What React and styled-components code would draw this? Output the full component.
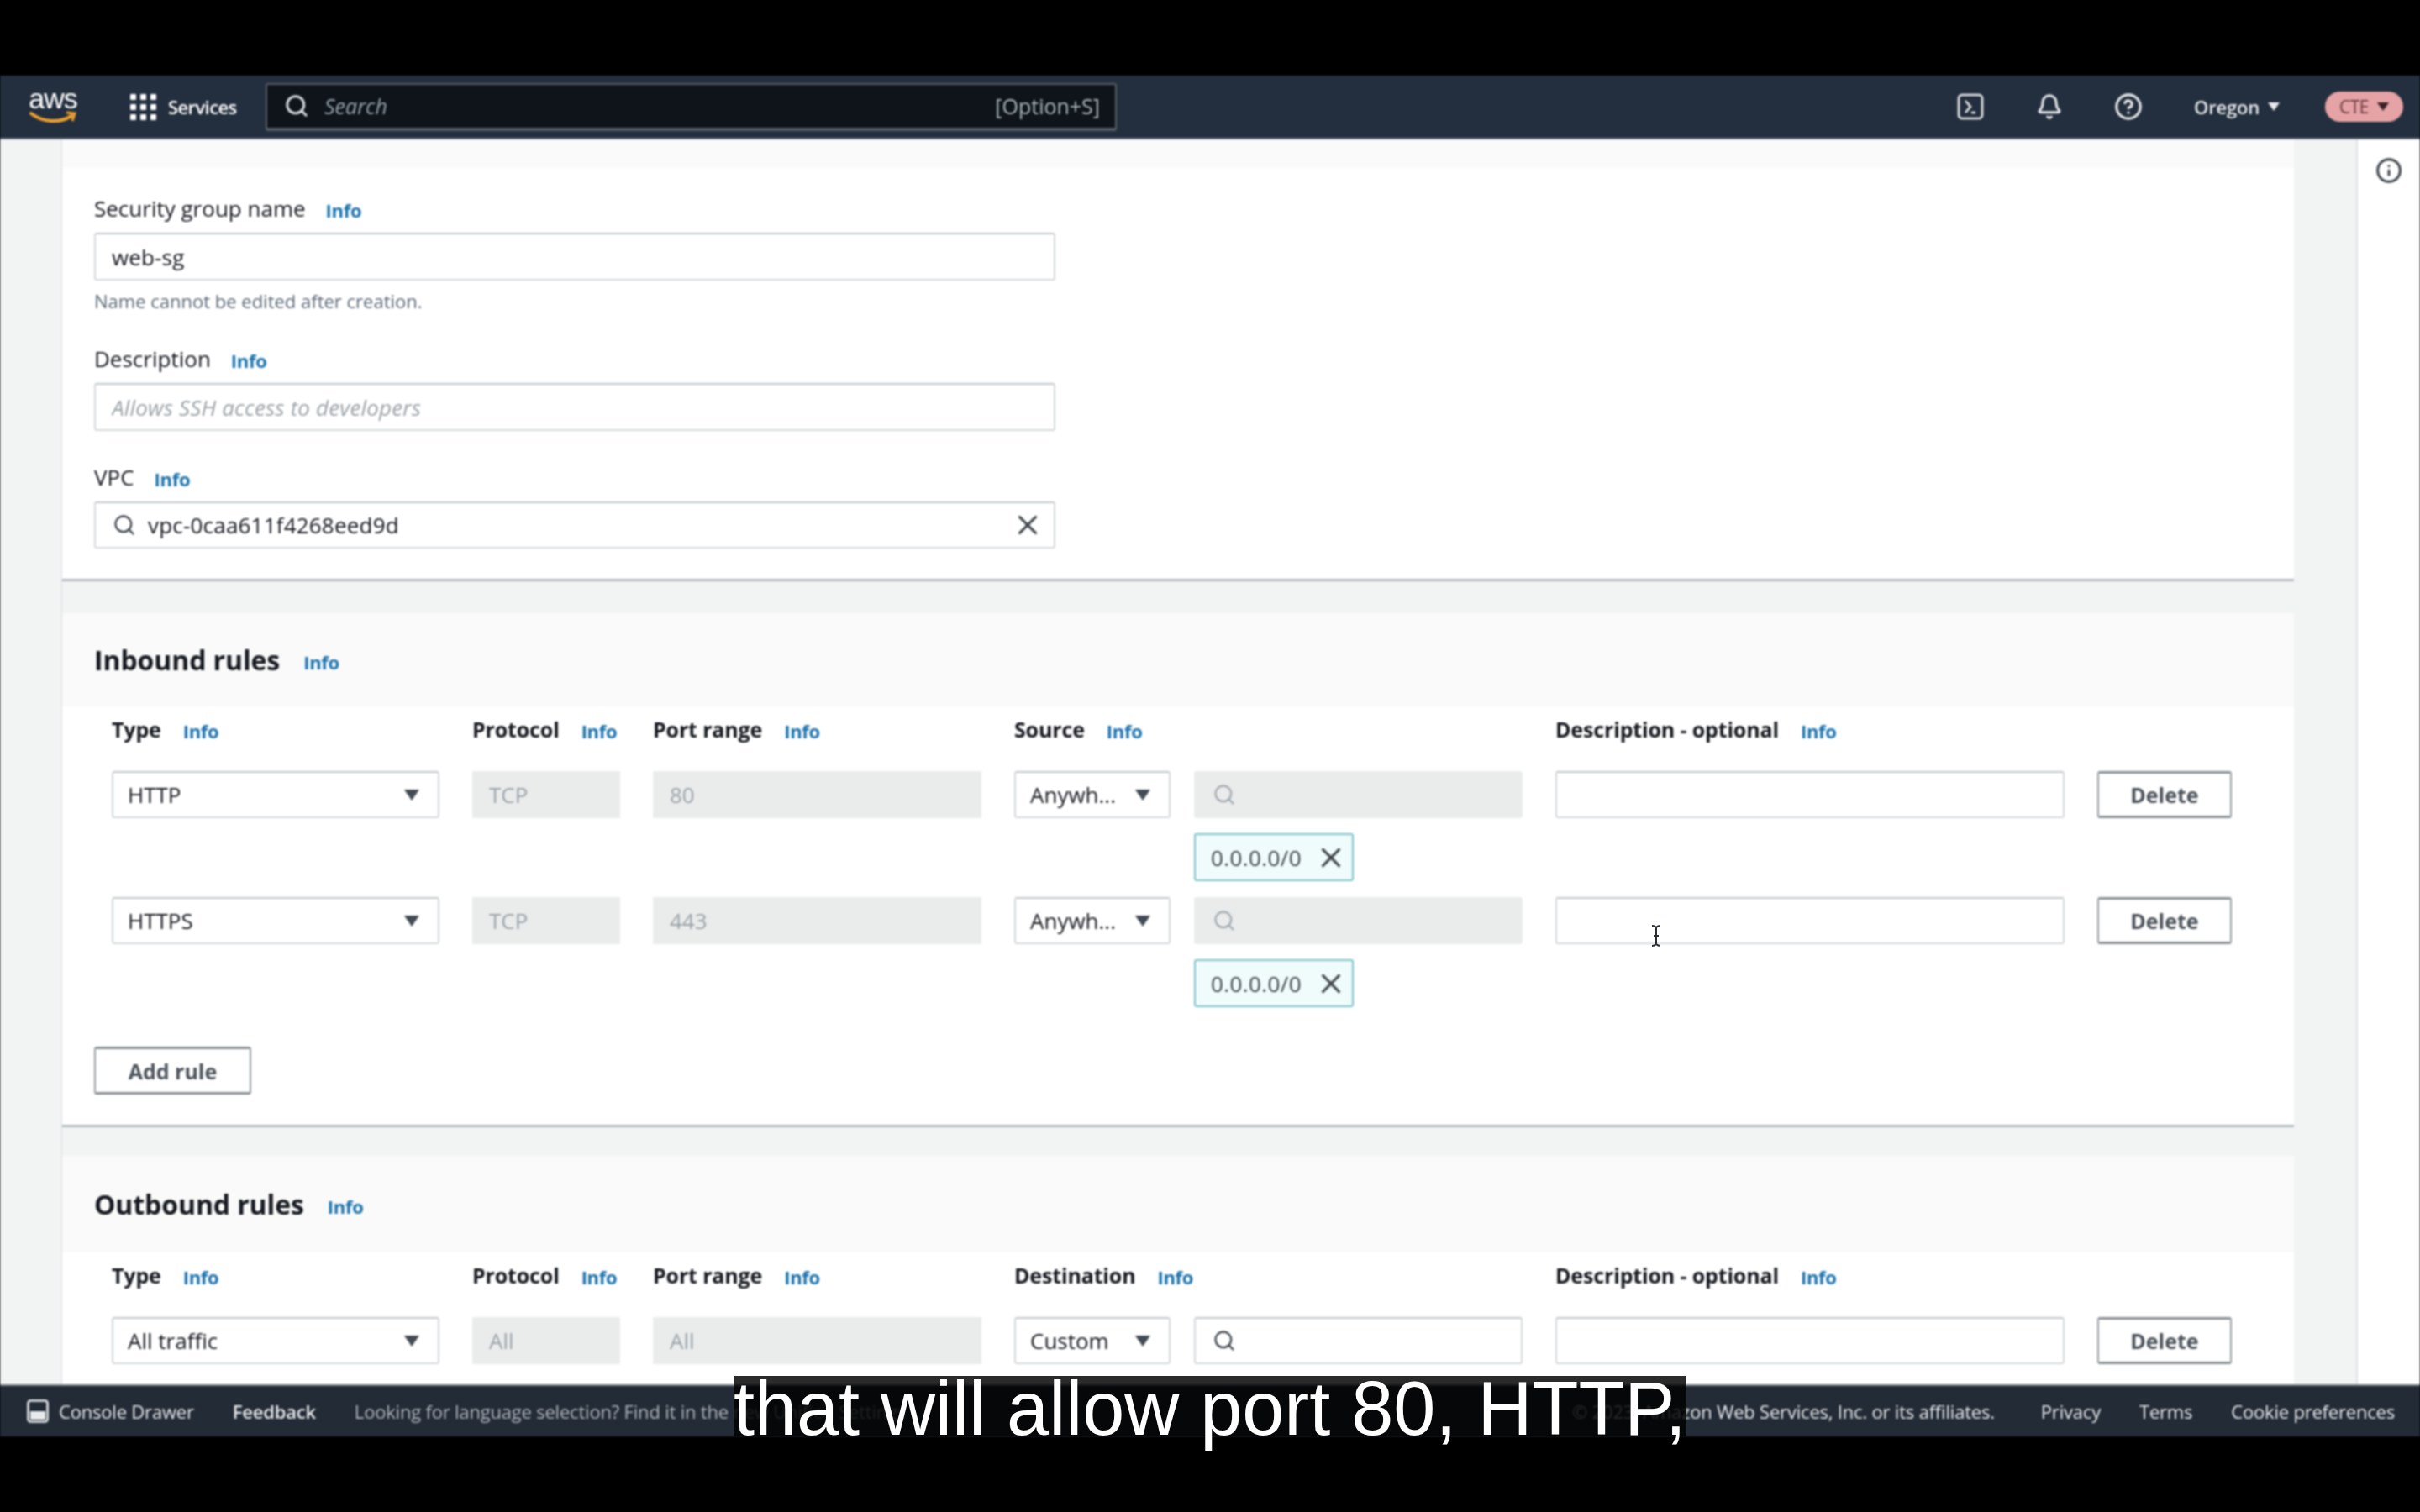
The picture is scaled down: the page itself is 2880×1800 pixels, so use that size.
import React from 'react';
import styled, { createGlobalStyle } from 'styled-components';
import { Search, X, Bell, CircleHelp, Info } from 'lucide-react';

const GlobalStyle = createGlobalStyle`
  html, body { margin: 0; padding: 0; background: #000; }
  * { box-sizing: border-box; }
  body { font-family: "Open Sans", "Noto Sans", "Liberation Sans", sans-serif; }
`;

const Frame = styled.div`
  position: relative;
  width: 2880px;
  height: 1800px;
  padding: 90px 0;
  background: #000;
  overflow: hidden;
`;

const Screen = styled.div`
  display: flex;
  flex-direction: column;
  height: 1620px;
  filter: blur(0.8px);
`;

/* top bar */
const TopNav = styled.header`
  flex: none;
  display: flex;
  align-items: center;
  height: 76px;
  padding: 0 20px 0 33px;
  background: #232f3e;
  border-bottom: 2px solid #6b7480;
  color: #fff;
`;

const Logo = styled.div`
  display: flex;
  flex-direction: column;
  align-items: center;
  width: 60px;
  margin-right: 62px;
  line-height: 1;
`;

const LogoWord = styled.span`
  font-family: "Liberation Sans", sans-serif;
  font-size: 34px;
  height: 28px;
  line-height: 26px;
  letter-spacing: -1px;
`;

const ServicesButton = styled.div`
  display: flex;
  align-items: center;
  gap: 14px;
  width: 161px;
  font-size: 22px;
  font-weight: 600;
  letter-spacing: -0.6px;
`;

const SearchBox = styled.div`
  display: flex;
  align-items: center;
  width: 1013px;
  height: 57px;
  padding: 0 18px 0 20px;
  background: #0f141b;
  border: 2px solid #545b64;
  border-bottom-width: 4px;
  border-radius: 3px;
  color: #aab7b8;
  font-size: 25px;
`;

const SearchHint = styled.span`
  margin-left: 18px;
  flex: 1;
  font-style: italic;
  color: #95a0a8;
`;

const NavRight = styled.div`
  display: flex;
  align-items: center;
  margin-left: auto;
`;

const NavIcon = styled.div`
  display: flex;
  justify-content: center;
  width: 94px;
`;

const Region = styled.div`
  display: flex;
  align-items: center;
  gap: 10px;
  margin-left: 31px;
  font-size: 22px;
  font-weight: 600;
  color: #e8eaec;
  letter-spacing: -0.2px;
`;

const Caret = styled.i`
  display: block;
  flex: none;
  width: 0;
  height: 0;
  border-left: ${(p) => p.$size || 9}px solid transparent;
  border-right: ${(p) => p.$size || 9}px solid transparent;
  border-top: ${(p) => (p.$size || 9) * 1.55}px solid ${(p) => p.$color || '#444b53'};
`;

const AccountPill = styled.div`
  display: flex;
  align-items: center;
  justify-content: center;
  gap: 10px;
  width: 93px;
  height: 36px;
  margin-left: 54px;
  border-radius: 18px;
  background: #e5a3a6;
  color: #6a3b40;
  font-size: 21px;
  letter-spacing: -0.5px;
`;

/* page body */
const Body = styled.div`
  flex: 1;
  display: flex;
  min-height: 0;
  background: #f2f3f3;
`;

const Main = styled.main`
  width: 2657px;
  margin-left: 73px;
  border-left: 1px solid #dde0e2;
  overflow: hidden;
`;

const Panel = styled.aside`
  display: flex;
  justify-content: center;
  width: 76px;
  margin-left: 74px;
  padding-top: 21px;
  background: #fff;
  border-left: 2px solid #dfe2e4;
  color: #3c4248;
`;

const Card = styled.section`
  margin-top: ${(p) => p.$top || 0}px;
  padding-bottom: ${(p) => p.$bottom || 0}px;
  background: #fff;
  border-bottom: 3px solid #b4b9bc;
`;

const CardHeader = styled.div`
  display: flex;
  align-items: center;
  gap: 28px;
  height: ${(p) => p.$height}px;
  padding: 0 38px;
  background: #fafafa;
`;

const CardTitle = styled.h2`
  margin: 0;
  font-size: 32px;
  font-weight: 700;
  letter-spacing: -0.1px;
  color: #16191f;
`;

const FormBody = styled.div`
  padding: 31px 38px 36px;
`;

const Field = styled.div`
  width: 1144px;
  & + & { margin-top: 38px; }
`;

const FieldLabel = styled.div`
  display: flex;
  align-items: center;
  gap: 24px;
  height: 34px;
  margin-bottom: 12px;
  font-size: 26px;
  color: #16191f;
`;

const InfoLink = styled.span`
  margin-top: 4px;
  font-size: 22px;
  font-weight: 700;
  letter-spacing: -0.3px;
  color: #1a73ad;
`;

const TextInput = styled.input`
  display: block;
  width: 100%;
  height: 57px;
  padding: 0 19px;
  border: 2px solid #d5d8da;
  border-top-color: #c2c6c9;
  border-radius: 3px;
  outline: none;
  background: #fff;
  font: 26px "Open Sans", sans-serif;
  letter-spacing: 0.15px;
  color: #16191f;
  &::placeholder { font-style: italic; color: #9ba3a8; opacity: 1; }
`;

const Hint = styled.div`
  height: 28px;
  margin-top: 10px;
  font-size: 22px;
  line-height: 28px;
  color: #5f6b7a;
`;

const SearchField = styled.div`
  display: flex;
  align-items: center;
  gap: 14px;
  height: ${(p) => p.$height || 56}px;
  padding: 0 12px 0 20px;
  border: 2px solid ${(p) => (p.$disabled ? '#eaecec' : '#d5d8da')};
  border-top-color: ${(p) => (p.$disabled ? '#eaecec' : '#c2c6c9')};
  border-radius: 3px;
  background: ${(p) => (p.$disabled ? '#eaecec' : '#fff')};
  font-size: 26px;
  letter-spacing: 0.2px;
  color: ${(p) => (p.$disabled ? '#a3aaae' : '#3c4248')};
`;

const FieldValue = styled.span`
  flex: 1;
  color: #16191f;
`;

/* rule tables */
const Columns = styled.div`
  display: grid;
  grid-template-columns: 390px 176px 391px 605px 606px 160px;
  column-gap: 39px;
  padding-left: 59px;
`;

const HeadRow = styled(Columns)`
  padding-top: ${(p) => p.$top}px;
  padding-bottom: ${(p) => p.$bottom}px;
`;

const RuleRow = styled(Columns)`
  margin-bottom: 19px;
`;

const HeadCell = styled.div`
  display: flex;
  align-items: center;
  gap: 26px;
  height: 34px;
  font-size: 25px;
  font-weight: 700;
  letter-spacing: -0.15px;
  color: #16191f;
`;

const SelectBox = styled.div`
  display: flex;
  align-items: center;
  justify-content: space-between;
  height: 56px;
  padding: 0 22px 0 17px;
  border: 2px solid #d5d8da;
  border-top-color: #c2c6c9;
  border-radius: 3px;
  background: #fff;
  font-size: 26px;
  color: #16191f;
`;

const DisabledBox = styled.div`
  display: flex;
  align-items: center;
  height: 56px;
  padding: 0 20px;
  background: #eaecec;
  font-size: 26px;
  color: #9ba3a8;
`;

const EmptyInput = styled.div`
  height: 56px;
  border: 2px solid #d5d8da;
  border-top-color: #c2c6c9;
  border-radius: 3px;
  background: #fff;
`;

const SourceCell = styled.div`
  display: grid;
  grid-template-columns: 186px 391px;
  column-gap: 28px;
  row-gap: 18px;
`;

const Chip = styled.div`
  grid-column: 2;
  display: flex;
  align-items: center;
  justify-content: space-between;
  width: 190px;
  height: 57px;
  padding: 0 6px 0 18px;
  background: #f0fbfc;
  border: 2px solid #7cc4c9;
  border-radius: 3px;
  font-size: 26px;
  letter-spacing: 0.4px;
  color: #3c4248;
`;

const OutlineButton = styled.div`
  display: flex;
  align-items: center;
  justify-content: center;
  width: ${(p) => p.$width}px;
  height: ${(p) => p.$height || 56}px;
  border: 2px solid #9aa0a5;
  border-top: 3px solid #8b9196;
  border-bottom: 3px solid #8b9196;
  border-radius: 3px;
  background: #fff;
  font-size: 25px;
  font-weight: 700;
  color: #4b5259;
`;

const AddRow = styled.div`
  padding: 28px 38px 36px;
`;

const TextCursor = styled.svg`
  position: absolute;
  left: 1961px;
  top: 1100px;
`;

/* footer */
const Footer = styled.footer`
  flex: none;
  display: flex;
  align-items: center;
  height: 62px;
  padding: 0 30px 0 32px;
  background: #232b37;
  border-top: 2px solid #7d848c;
  font-size: 22px;
  letter-spacing: -0.2px;
  color: #e8eaec;
`;

const FooterItem = styled.span`
  display: flex;
  align-items: center;
  gap: 12px;
  margin-left: ${(p) => (p.$push ? 'auto' : '0')};
  margin-right: ${(p) => p.$gap || 0}px;
  font-weight: ${(p) => p.$weight || 400};
  color: ${(p) => p.$color || 'inherit'};
  white-space: nowrap;
`;

const Caption = styled.div`
  position: absolute;
  left: 873px;
  top: 1638px;
  width: 1134px;
  height: 72px;
  background: rgba(0, 0, 0, 0.83);
  font-family: "Liberation Sans", Arial, sans-serif;
  font-size: 90px;
  line-height: 78px;
  color: #fff;
  white-space: nowrap;
`;

const CloudShellIcon = () => (
  <svg width="32" height="32" viewBox="0 0 32 32" fill="none" stroke="#e8eaec" strokeWidth="2.6">
    <rect x="2" y="2" width="28" height="28" rx="4" />
    <path d="M10 9l6 7-6 7M17 23h5" />
  </svg>
);

const GridIcon = () => (
  <svg width="31" height="31" viewBox="0 0 31 31" fill="#fff">
    {[0, 12, 24].flatMap((y) =>
      [0, 12, 24].map((x) => <rect key={`${x}-${y}`} x={x} y={y} width="7" height="7" rx="1" />)
    )}
  </svg>
);

const Smile = () => (
  <svg width="58" height="18" viewBox="0 0 58 18" fill="none">
    <path d="M3 3c14 11 34 12 48 3" stroke="#f0a030" strokeWidth="4" strokeLinecap="round" />
    <path d="M45 2l10 1-3 9" stroke="#f0a030" strokeWidth="3" />
  </svg>
);

const DrawerIcon = () => (
  <svg width="26" height="28" viewBox="0 0 26 28" fill="none">
    <rect x="1.5" y="1.5" width="23" height="25" rx="3" stroke="#e8eaec" strokeWidth="2.6" />
    <rect x="4" y="14" width="18" height="10" fill="#e8eaec" />
  </svg>
);

const InfoHead = ({ children }) => (
  <HeadCell>
    {children}
    <InfoLink>Info</InfoLink>
  </HeadCell>
);

const RuleHead = ({ top, bottom, target }) => (
  <HeadRow $top={top} $bottom={bottom}>
    <InfoHead>Type</InfoHead>
    <InfoHead>Protocol</InfoHead>
    <InfoHead>Port range</InfoHead>
    <InfoHead>{target}</InfoHead>
    <InfoHead>Description - optional</InfoHead>
  </HeadRow>
);

const Rule = ({ type, protocol, port, source, open }) => (
  <RuleRow>
    <SelectBox>
      {type}
      <Caret />
    </SelectBox>
    <DisabledBox>{protocol}</DisabledBox>
    <DisabledBox>{port}</DisabledBox>
    <SourceCell>
      <SelectBox>
        {source}
        <Caret />
      </SelectBox>
      <SearchField $disabled={open}>
        <Search size={28} strokeWidth={2} />
      </SearchField>
      {open && (
        <Chip>
          0.0.0.0/0
          <X size={38} strokeWidth={2} />
        </Chip>
      )}
    </SourceCell>
    <EmptyInput />
    <OutlineButton $width={160}>Delete</OutlineButton>
  </RuleRow>
);

export default function App() {
  return (
    <Frame>
      <GlobalStyle />
      <Screen>
        <TopNav>
          <Logo>
            <LogoWord>aws</LogoWord>
            <Smile />
          </Logo>
          <ServicesButton>
            <GridIcon />
            Services
          </ServicesButton>
          <SearchBox>
            <Search size={30} strokeWidth={2.4} color="#d5dade" />
            <SearchHint>Search</SearchHint>
            [Option+S]
          </SearchBox>
          <NavRight>
            <NavIcon><CloudShellIcon /></NavIcon>
            <NavIcon><Bell size={32} strokeWidth={2.2} color="#e8eaec" /></NavIcon>
            <NavIcon><CircleHelp size={34} strokeWidth={2.2} color="#e8eaec" /></NavIcon>
            <Region>
              Oregon
              <Caret $size={7} $color="#e8eaec" />
            </Region>
            <AccountPill>
              CTE
              <Caret $size={7} $color="#3a2226" />
            </AccountPill>
          </NavRight>
        </TopNav>

        <Body>
          <Main>
            <Card>
              <CardHeader $height={34} />
              <FormBody>
                <Field>
                  <FieldLabel>Security group name <InfoLink>Info</InfoLink></FieldLabel>
                  <TextInput readOnly value="web-sg" />
                  <Hint>Name cannot be edited after creation.</Hint>
                </Field>
                <Field>
                  <FieldLabel>Description <InfoLink>Info</InfoLink></FieldLabel>
                  <TextInput readOnly placeholder="Allows SSH access to developers" />
                </Field>
                <Field>
                  <FieldLabel>VPC <InfoLink>Info</InfoLink></FieldLabel>
                  <SearchField>
                    <Search size={28} strokeWidth={2} />
                    <FieldValue>vpc-0caa611f4268eed9d</FieldValue>
                    <X size={38} strokeWidth={2} />
                  </SearchField>
                </Field>
              </FormBody>
            </Card>

            <Card $top={38}>
              <CardHeader $height={111}>
                <CardTitle>Inbound rules</CardTitle>
                <InfoLink>Info</InfoLink>
              </CardHeader>
              <RuleHead top={10} bottom={33} target="Source" />
              <Rule type="HTTP" protocol="TCP" port="80" source="Anywh..." open />
              <Rule type="HTTPS" protocol="TCP" port="443" source="Anywh..." open />
              <AddRow>
                <OutlineButton $width={187} $height={57}>Add rule</OutlineButton>
              </AddRow>
            </Card>

            <Card $top={34} $bottom={120}>
              <CardHeader $height={115}>
                <CardTitle>Outbound rules</CardTitle>
                <InfoLink>Info</InfoLink>
              </CardHeader>
              <RuleHead top={10} bottom={33} target="Destination" />
              <Rule type="All traffic" protocol="All" port="All" source="Custom" />
            </Card>
          </Main>
          <Panel>
            <Info size={32} strokeWidth={2.2} />
          </Panel>
        </Body>

        <Footer>
          <FooterItem $gap={46}>
            <DrawerIcon />
            Console Drawer
          </FooterItem>
          <FooterItem $gap={46} $weight={600}>Feedback</FooterItem>
          <FooterItem $color="#aeb4ba">Looking for language selection? Find it in the new Unified Settings</FooterItem>
          <FooterItem $gap={55} $push $color="#e8eaec">
            © 2023, Amazon Web Services, Inc. or its affiliates.
          </FooterItem>
          <FooterItem $gap={46}>Privacy</FooterItem>
          <FooterItem $gap={46}>Terms</FooterItem>
          <FooterItem>Cookie preferences</FooterItem>
        </Footer>
      </Screen>

      <TextCursor width="20" height="28" viewBox="0 0 20 28" fill="none" stroke="#2a2f35" strokeWidth="2">
        <path d="M5 2c3 0 4 1 5 2 1-1 2-2 5-2M10 4v20M5 26c3 0 4-1 5-2 1 1 2 2 5 2M7 14h6" />
      </TextCursor>
      <Caption>that will allow port 80, HTTP,</Caption>
    </Frame>
  );
}
